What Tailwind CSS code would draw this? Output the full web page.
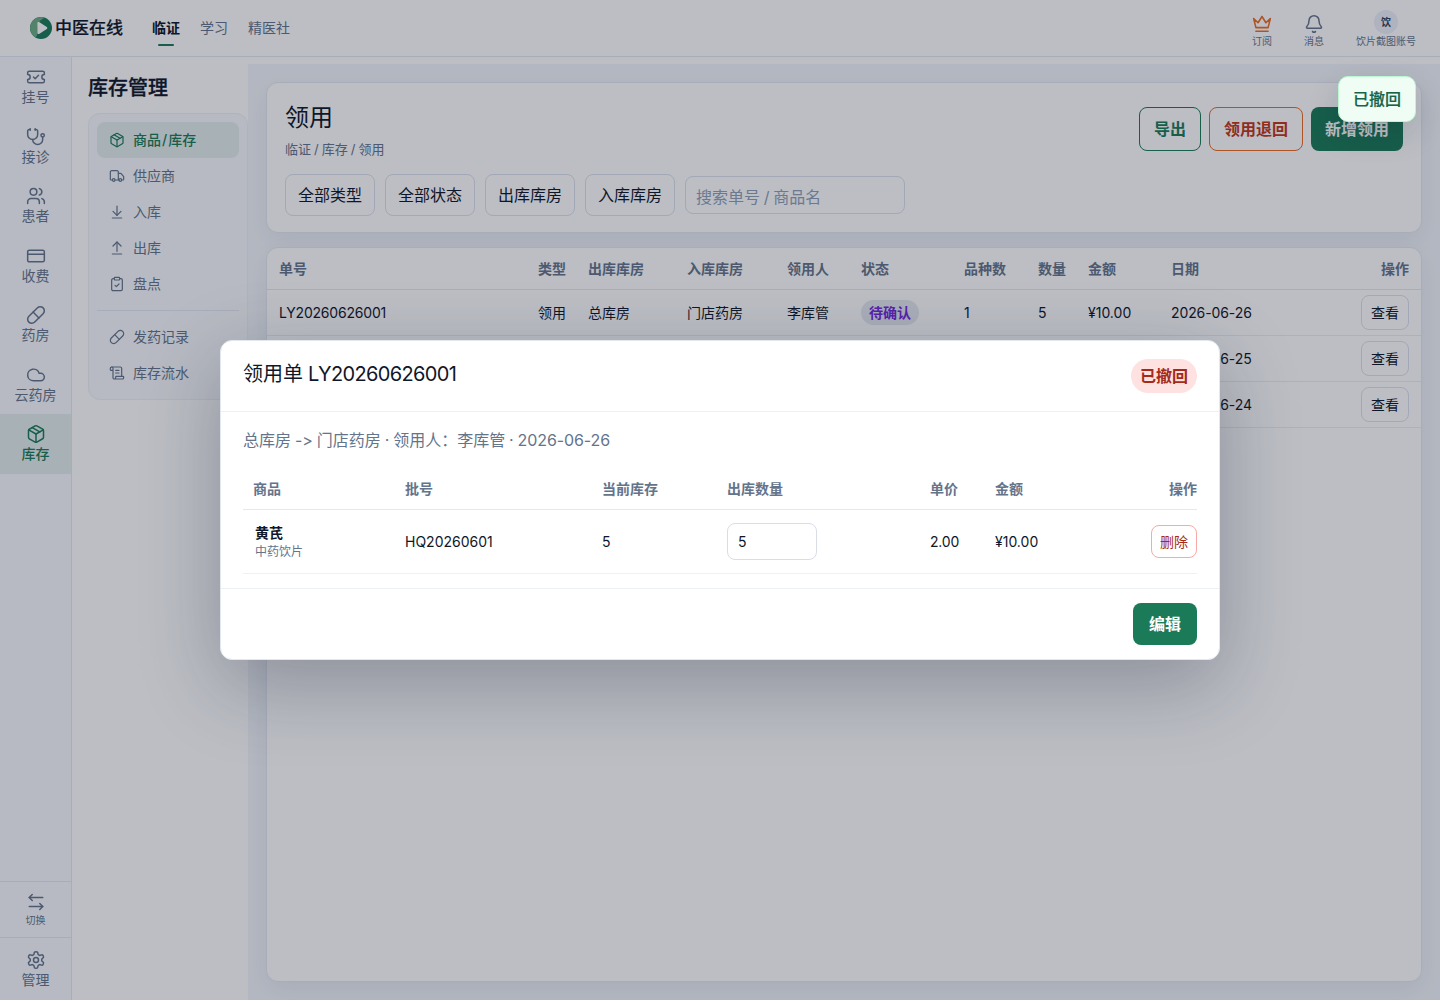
<!DOCTYPE html>
<html lang="zh-CN">
<head>
    <meta charset="UTF-8">
    <meta name="viewport" content="width=device-width, initial-scale=1.0">
    <title>中医在线 - 领用</title>
    <script src="https://cdn.jsdelivr.net/npm/@tailwindcss/browser@4"></script>
</head>
<body class="bg-white text-sm text-[#0f172a] font-[Inter,'Noto_Sans_CJK_SC',sans-serif] [font-feature-settings:'calt'_0]">
<div class="relative h-[1000px] overflow-hidden flex flex-col">

    <!-- Top bar -->
    <header class="h-[57px] shrink-0 flex items-center bg-white border-b border-slate-200 pl-[30px] pr-6">
        <svg class="w-[22px] h-[22px]" viewBox="0 0 22 22">
            <circle cx="11" cy="11" r="11" fill="#1b7a58"/>
            <path d="M15 .75A11 11 0 0 0 5.500 20.500C8 18 7.500 15 7.500 11C7.500 6 10 2.500 15 .75Z" fill="#6fae86"/>
            <path d="M7.400 6c0-.9.900-1.400 1.700-.9l7.700 4.900c.7.500.7 1.500 0 2l-7.700 4.900c-.8.500-1.700 0-1.700-.9Z" fill="#fff"/>
        </svg>
        <span class="ml-[3px] text-[17px] leading-6 font-medium [-webkit-text-stroke:0.2px]">中医在线</span>
        <nav class="ml-[29px] flex h-full gap-5 text-[#64748b]">
            <a class="flex flex-col items-center pt-[17px] font-bold text-[#0f172a]"><span class="leading-[22px]">临证</span><span class="mt-[5px] w-4 h-0.5 rounded bg-[#1b7a58]"></span></a>
            <a class="pt-[17px] leading-[22px]">学习</a>
            <a class="pt-[17px] leading-[22px]">精医社</a>
        </nav>
        <div class="ml-auto flex h-full gap-8 pt-[10px] text-[10px] leading-[14px] text-[#64748b]">
            <div class="w-5 flex flex-col items-center">
                <svg class="w-5 h-5 mt-1 text-[#ee6c24]" viewBox="0 0 24 24" fill="none" stroke="currentColor" stroke-width="1.900" stroke-linecap="round" stroke-linejoin="round"><path d="M2 5.500 7.300 10.500 12 3l4.700 7.500L22 5.500 19.300 16.300H4.700Z"/><path d="M4.700 20.700h14.600"/></svg>
                <span class="whitespace-nowrap">订阅</span>
            </div>
            <div class="w-5 flex flex-col items-center">
                <svg class="w-5 h-5 mt-1" viewBox="0 0 24 24" fill="none" stroke="currentColor" stroke-width="1.800" stroke-linecap="round" stroke-linejoin="round"><path d="M10.268 21a2 2 0 0 0 3.464 0"/><path d="M3.262 15.326A1 1 0 0 0 4 17h16a1 1 0 0 0 .740-1.673C19.410 13.956 18 12.499 18 8A6 6 0 0 0 6 8c0 4.499-1.411 5.956-2.738 7.326"/></svg>
                <span class="whitespace-nowrap">消息</span>
            </div>
            <div class="flex flex-col items-center">
                <span class="w-6 h-6 rounded-full bg-[#eef0f9] text-slate-700 font-bold flex items-center justify-center">饮</span>
                <span>饮片截图账号</span>
            </div>
        </div>
    </header>

    <div class="flex flex-1 min-h-0">
        <!-- Main sidebar -->
        <aside class="w-[72px] shrink-0 flex flex-col bg-[#f8fafc] border-r border-slate-200 text-[#64748b] leading-5">
            <a class="h-[59.500px] flex flex-col items-center pt-[10px]">
                <svg class="w-5 h-5" viewBox="0 0 24 24" fill="none" stroke="currentColor" stroke-width="1.800" stroke-linecap="round" stroke-linejoin="round"><path d="M2 9a3 3 0 1 1 0 6v2a2 2 0 0 0 2 2h16a2 2 0 0 0 2-2v-2a3 3 0 1 1 0-6V7a2 2 0 0 0-2-2H4a2 2 0 0 0-2 2Z"/><path d="m9 12 2 2 4-4"/></svg>
                <span>挂号</span>
            </a>
            <a class="h-[59.500px] flex flex-col items-center pt-[10px]">
                <svg class="w-5 h-5" viewBox="0 0 24 24" fill="none" stroke="currentColor" stroke-width="1.800" stroke-linecap="round" stroke-linejoin="round"><path d="M11 2v2"/><path d="M5 2v2"/><path d="M5 3H4a2 2 0 0 0-2 2v4a6 6 0 0 0 12 0V5a2 2 0 0 0-2-2h-1"/><path d="M8 15a6 6 0 0 0 12 0v-3"/><circle cx="20" cy="10" r="2"/></svg>
                <span>接诊</span>
            </a>
            <a class="h-[59.500px] flex flex-col items-center pt-[10px]">
                <svg class="w-5 h-5" viewBox="0 0 24 24" fill="none" stroke="currentColor" stroke-width="1.800" stroke-linecap="round" stroke-linejoin="round"><path d="M16 21v-2a4 4 0 0 0-4-4H6a4 4 0 0 0-4 4v2"/><path d="M16 3.128a4 4 0 0 1 0 7.744"/><path d="M22 21v-2a4 4 0 0 0-3-3.870"/><circle cx="9" cy="7" r="4"/></svg>
                <span>患者</span>
            </a>
            <a class="h-[59.500px] flex flex-col items-center pt-[10px]">
                <svg class="w-5 h-5" viewBox="0 0 24 24" fill="none" stroke="currentColor" stroke-width="1.800" stroke-linecap="round" stroke-linejoin="round"><rect x="2" y="5" width="20" height="14" rx="2"/><path d="M2 10h20"/></svg>
                <span>收费</span>
            </a>
            <a class="h-[59.500px] flex flex-col items-center pt-[10px]">
                <svg class="w-5 h-5" viewBox="0 0 24 24" fill="none" stroke="currentColor" stroke-width="1.800" stroke-linecap="round" stroke-linejoin="round"><path d="m10.500 20.500 10-10a4.950 4.950 0 1 0-7-7l-10 10a4.950 4.950 0 1 0 7 7Z"/><path d="m8.500 8.500 7 7"/></svg>
                <span>药房</span>
            </a>
            <a class="h-[59.500px] flex flex-col items-center pt-[10px]">
                <svg class="w-5 h-5" viewBox="0 0 24 24" fill="none" stroke="currentColor" stroke-width="1.800" stroke-linecap="round" stroke-linejoin="round"><path d="M17.500 19H9a7 7 0 1 1 6.710-9h1.790a4.500 4.500 0 1 1 0 9Z"/></svg>
                <span>云药房</span>
            </a>
            <a class="h-[59.500px] flex flex-col items-center pt-[10px] bg-[#e3eeec] text-[#1b7a58] font-medium">
                <svg class="w-5 h-5" viewBox="0 0 24 24" fill="none" stroke="currentColor" stroke-width="1.800" stroke-linecap="round" stroke-linejoin="round"><path d="M11 21.730a2 2 0 0 0 2 0l7-4A2 2 0 0 0 21 16V8a2 2 0 0 0-1-1.730l-7-4a2 2 0 0 0-2 0l-7 4A2 2 0 0 0 3 8v8a2 2 0 0 0 1 1.730z"/><path d="M12 22V12"/><path d="M3.290 7 12 12l8.710-5"/><path d="m7.500 4.270 9 5.150"/></svg>
                <span>库存</span>
            </a>
            <div class="mt-auto">
                <a class="h-14 flex flex-col items-center pt-[11px] border-t border-slate-200 text-[10px] leading-[18px]">
                    <svg class="w-[18px] h-[18px]" viewBox="0 0 24 24" fill="none" stroke="currentColor" stroke-width="2" stroke-linecap="round" stroke-linejoin="round"><path d="M7 2 3 6l4 4"/><path d="M3 6h18"/><path d="m17 14 4 4-4 4"/><path d="M21 18H3"/></svg>
                    <span>切换</span>
                </a>
                <a class="h-[63px] flex flex-col items-center pt-3 border-t border-slate-200">
                    <svg class="w-5 h-5" viewBox="0 0 24 24" fill="none" stroke="currentColor" stroke-width="1.800" stroke-linecap="round" stroke-linejoin="round"><path d="M12.220 2h-.44a2 2 0 0 0-2 2v.18a2 2 0 0 1-1 1.730l-.43.25a2 2 0 0 1-2 0l-.15-.08a2 2 0 0 0-2.730.730l-.22.38a2 2 0 0 0 .730 2.730l.15.100a2 2 0 0 1 1 1.720v.51a2 2 0 0 1-1 1.740l-.15.090a2 2 0 0 0-.730 2.730l.22.380a2 2 0 0 0 2.730.730l.15-.080a2 2 0 0 1 2 0l.43.250a2 2 0 0 1 1 1.730V20a2 2 0 0 0 2 2h.44a2 2 0 0 0 2-2v-.180a2 2 0 0 1 1-1.730l.43-.250a2 2 0 0 1 2 0l.15.080a2 2 0 0 0 2.730-.730l.22-.390a2 2 0 0 0-.730-2.730l-.15-.080a2 2 0 0 1-1-1.740v-.5a2 2 0 0 1 1-1.740l.15-.090a2 2 0 0 0 .730-2.730l-.22-.380a2 2 0 0 0-2.730-.730l-.15.080a2 2 0 0 1-2 0l-.43-.250a2 2 0 0 1-1-1.730V4a2 2 0 0 0-2-2z"/><circle cx="12" cy="12" r="3"/></svg>
                    <span>管理</span>
                </a>
            </div>
        </aside>

        <!-- Inventory menu -->
        <section class="w-44 shrink-0 bg-white pl-4 pt-[17px]">
            <h2 class="text-xl leading-7 font-medium [-webkit-text-stroke:0.3px]">库存管理</h2>
            <div class="mt-[11px] h-[287px] rounded-xl border border-[#edf0f5] bg-[#f8fafc] p-2 text-[#64748b]">
                <a class="h-9 px-3 flex items-center gap-2 rounded-lg bg-[#e3eeec] text-[#1b7a58] font-medium">
                    <svg class="w-4 h-4" viewBox="0 0 24 24" fill="none" stroke="currentColor" stroke-width="1.800" stroke-linecap="round" stroke-linejoin="round"><path d="M11 21.730a2 2 0 0 0 2 0l7-4A2 2 0 0 0 21 16V8a2 2 0 0 0-1-1.730l-7-4a2 2 0 0 0-2 0l-7 4A2 2 0 0 0 3 8v8a2 2 0 0 0 1 1.730z"/><path d="M12 22V12"/><path d="M3.290 7 12 12l8.710-5"/><path d="m7.500 4.270 9 5.150"/></svg>
                    <span>商品<span class="px-px">/</span>库存</span>
                </a>
                <a class="h-9 px-3 flex items-center gap-2">
                    <svg class="w-4 h-4" viewBox="0 0 24 24" fill="none" stroke="currentColor" stroke-width="1.800" stroke-linecap="round" stroke-linejoin="round"><path d="M14 18V6a2 2 0 0 0-2-2H4a2 2 0 0 0-2 2v11a1 1 0 0 0 1 1h2"/><path d="M15 18H9"/><path d="M19 18h2a1 1 0 0 0 1-1v-3.650a1 1 0 0 0-.22-.624l-3.480-4.350A1 1 0 0 0 17.520 8H14"/><circle cx="17" cy="18" r="2"/><circle cx="7" cy="18" r="2"/></svg>
                    供应商
                </a>
                <a class="h-9 px-3 flex items-center gap-2">
                    <svg class="w-4 h-4" viewBox="0 0 24 24" fill="none" stroke="currentColor" stroke-width="1.800" stroke-linecap="round" stroke-linejoin="round"><path d="M12 3v14"/><path d="m6 11 6 6 6-6"/><path d="M19 21H5"/></svg>
                    入库
                </a>
                <a class="h-9 px-3 flex items-center gap-2">
                    <svg class="w-4 h-4" viewBox="0 0 24 24" fill="none" stroke="currentColor" stroke-width="1.800" stroke-linecap="round" stroke-linejoin="round"><path d="m18 9-6-6-6 6"/><path d="M12 3v14"/><path d="M5 21h14"/></svg>
                    出库
                </a>
                <a class="h-9 px-3 flex items-center gap-2">
                    <svg class="w-4 h-4" viewBox="0 0 24 24" fill="none" stroke="currentColor" stroke-width="1.800" stroke-linecap="round" stroke-linejoin="round"><rect x="8" y="2" width="8" height="4" rx="1"/><path d="M16 4h2a2 2 0 0 1 2 2v14a2 2 0 0 1-2 2H6a2 2 0 0 1-2-2V6a2 2 0 0 1 2-2h2"/><path d="m9 14 2 2 4-4"/></svg>
                    盘点
                </a>
                <div class="my-2 h-px bg-slate-200"></div>
                <a class="h-9 px-3 flex items-center gap-2">
                    <svg class="w-4 h-4" viewBox="0 0 24 24" fill="none" stroke="currentColor" stroke-width="1.800" stroke-linecap="round" stroke-linejoin="round"><path d="m10.500 20.500 10-10a4.950 4.950 0 1 0-7-7l-10 10a4.950 4.950 0 1 0 7 7Z"/><path d="m8.500 8.500 7 7"/></svg>
                    发药记录
                </a>
                <a class="h-9 px-3 flex items-center gap-2">
                    <svg class="w-4 h-4" viewBox="0 0 24 24" fill="none" stroke="currentColor" stroke-width="1.800" stroke-linecap="round" stroke-linejoin="round"><path d="M15 12h-5"/><path d="M15 8h-5"/><path d="M19 17V5a2 2 0 0 0-2-2H4"/><path d="M8 21h12a2 2 0 0 0 2-2v-1a1 1 0 0 0-1-1H11a1 1 0 0 0-1 1v1a2 2 0 1 1-4 0V5a2 2 0 1 0-4 0v2a1 1 0 0 0 1 1h3"/></svg>
                    库存流水
                </a>
            </div>
        </section>

        <!-- Content -->
        <main class="mt-[7px] flex-1 min-w-0 flex flex-col gap-[14px] bg-[#f3f6fb] p-[18px]">
            <div class="h-[151px] shrink-0 rounded-xl border border-slate-200 bg-white px-[18px] shadow-[0_8px_24px_rgba(15,23,42,0.06)]">
                <div class="flex justify-between">
                    <div class="pt-[17px]">
                        <h1 class="text-2xl leading-9">领用</h1>
                        <p class="mt-[3px] mb-px text-[13px] leading-5 text-[#64748b] [word-spacing:-0.6px]">临证 / 库存 / 领用</p>
                    </div>
                    <div class="flex gap-2 pt-6 text-base font-bold">
                        <button class="w-[62px] h-11 rounded-lg border border-[#1b7a58] text-[#1b7a58]">导出</button>
                        <button class="w-[94px] h-11 rounded-lg border border-[#ea6c24] text-[#c2371a]">领用退回</button>
                        <button class="w-[92px] h-11 rounded-lg bg-[#1b7a58] text-white">新增领用</button>
                    </div>
                </div>
                <div class="mt-[14px] flex items-center gap-[10px] text-base">
                    <button class="w-[90px] h-[42px] rounded-lg border border-[#dbe1ea]">全部类型</button>
                    <button class="w-[90px] h-[42px] rounded-lg border border-[#dbe1ea]">全部状态</button>
                    <button class="w-[90px] h-[42px] rounded-lg border border-[#dbe1ea]">出库库房</button>
                    <button class="w-[90px] h-[42px] rounded-lg border border-[#dbe1ea]">入库库房</button>
                    <input class="w-[220px] h-[38px] rounded-lg border border-[#dbe1ea] px-[10px] pt-[3px] placeholder:text-slate-400 [word-spacing:-0.8px]" placeholder="搜索单号 / 商品名">
                </div>
            </div>

            <div class="flex-1 rounded-xl border border-slate-200 bg-white overflow-hidden shadow-[0_8px_24px_rgba(15,23,42,0.06)]">
                <div class="h-[42px] px-3 border-b border-slate-200 grid grid-cols-[259px_50px_99px_100px_74px_103px_74px_50px_83px_1fr_48px] items-center font-bold text-[#64748b]">
                    <span>单号</span><span>类型</span><span>出库库房</span><span>入库库房</span><span>领用人</span><span>状态</span><span>品种数</span><span>数量</span><span>金额</span><span>日期</span><span class="text-right">操作</span>
                </div>
                <div class="h-[46px] px-3 border-b border-[#e9edf3] grid grid-cols-[259px_50px_99px_100px_74px_103px_74px_50px_83px_1fr_48px] items-center">
                    <span class="tracking-[-0.200px]">LY20260626001</span><span>领用</span><span>总库房</span><span>门店药房</span><span>李库管</span>
                    <span><span class="inline-flex h-[25px] w-[58px] items-center justify-center rounded-full bg-[#e5e9f0] font-bold text-[#7429dc]">待确认</span></span>
                    <span>1</span><span>5</span><span>¥10.00</span><span class="tracking-[-0.100px]">2026-06-26</span>
                    <button class="h-[35px] rounded-lg border border-[#dbe1ea]">查看</button>
                </div>
                <div class="h-[46px] px-3 border-b border-[#e9edf3] grid grid-cols-[259px_50px_99px_100px_74px_103px_74px_50px_83px_1fr_48px] items-center">
                    <span class="tracking-[-0.200px]">LY20260625001</span><span>领用</span><span>总库房</span><span>门店药房</span><span>李库管</span><span>已完成</span><span>1</span><span>5</span><span>¥10.00</span><span class="tracking-[-0.100px]">2026-06-25</span>
                    <button class="h-[35px] rounded-lg border border-[#dbe1ea]">查看</button>
                </div>
                <div class="h-[46px] px-3 border-b border-[#e9edf3] grid grid-cols-[259px_50px_99px_100px_74px_103px_74px_50px_83px_1fr_48px] items-center">
                    <span class="tracking-[-0.200px]">LY20260624001</span><span>领用</span><span>总库房</span><span>门店药房</span><span>李库管</span><span>已完成</span><span>1</span><span>5</span><span>¥10.00</span><span class="tracking-[-0.100px]">2026-06-24</span>
                    <button class="h-[35px] rounded-lg border border-[#dbe1ea]">查看</button>
                </div>
            </div>
        </main>
    </div>

    <!-- Dialog -->
    <div class="absolute inset-0 flex items-center justify-center bg-[#0f172a]/28">
        <div class="w-[1000px] h-80 flex flex-col rounded-xl border border-slate-200 bg-white shadow-[0_24px_80px_rgba(15,23,42,0.28)]">
            <div class="h-[71px] px-[22px] flex justify-between border-b border-[#edf0f4]">
                <h3 class="pt-[18px] text-xl leading-[30px]">领用单<span class="tracking-[-0.650px]"> LY20260626001</span></h3>
                <span class="mt-[18px] h-[34px] px-[9px] rounded-full bg-[#fee2e2] text-base leading-[34px] font-bold text-[#a52a1a]">已撤回</span>
            </div>
            <div class="h-[177px] px-[22px] border-b border-[#edf0f4]">
                <p class="pt-4 text-base leading-6 text-[#64748b] [word-spacing:-0.6px]">总库房 -&gt; 门店药房 · 领用人：李库管 · <span class="tracking-[-0.100px]">2026-06-26</span></p>
                <div class="mt-4 h-[42px] pl-[10px] border-b border-slate-200 grid grid-cols-[152px_197px_125px_203px_65px_1fr_46px] items-center font-bold text-[#64748b]">
                    <span>商品</span><span>批号</span><span>当前库存</span><span>出库数量</span><span>单价</span><span>金额</span><span class="text-right">操作</span>
                </div>
                <div class="h-16 pl-[10px] border-b border-[#edf0f4] grid grid-cols-[152px_197px_125px_203px_65px_1fr_46px] items-center">
                    <div class="pl-0.5">
                        <div class="leading-5 font-bold">黄芪</div>
                        <div class="text-xs leading-[17px] text-[#64748b]">中药饮片</div>
                    </div>
                    <span>HQ20260601</span><span>5</span>
                    <input class="w-[90px] h-[37px] rounded-lg border border-[#d9dee6] px-[10px]" value="5">
                    <span class="tracking-[-0.200px]">2.00</span><span>¥10.00</span>
                    <button class="h-[33px] rounded-lg border border-[#f9a8a8] text-[#a52a1a]">删除</button>
                </div>
            </div>
            <div class="flex-1 px-[22px] flex items-center justify-end">
                <button class="w-16 h-[42px] rounded-lg bg-[#1b7a58] text-base font-bold text-white">编辑</button>
            </div>
        </div>
    </div>

    <!-- Toast -->
    <div class="absolute top-[76px] right-6 w-[78px] h-[46px] flex items-center justify-center rounded-[10px] border border-[#bbf7d0] bg-[#f0fdf4] text-base font-medium text-[#17644a] [-webkit-text-stroke:0.2px] shadow-[0_12px_32px_rgba(15,23,42,0.14)]">已撤回</div>
</div>
</body>
</html>
